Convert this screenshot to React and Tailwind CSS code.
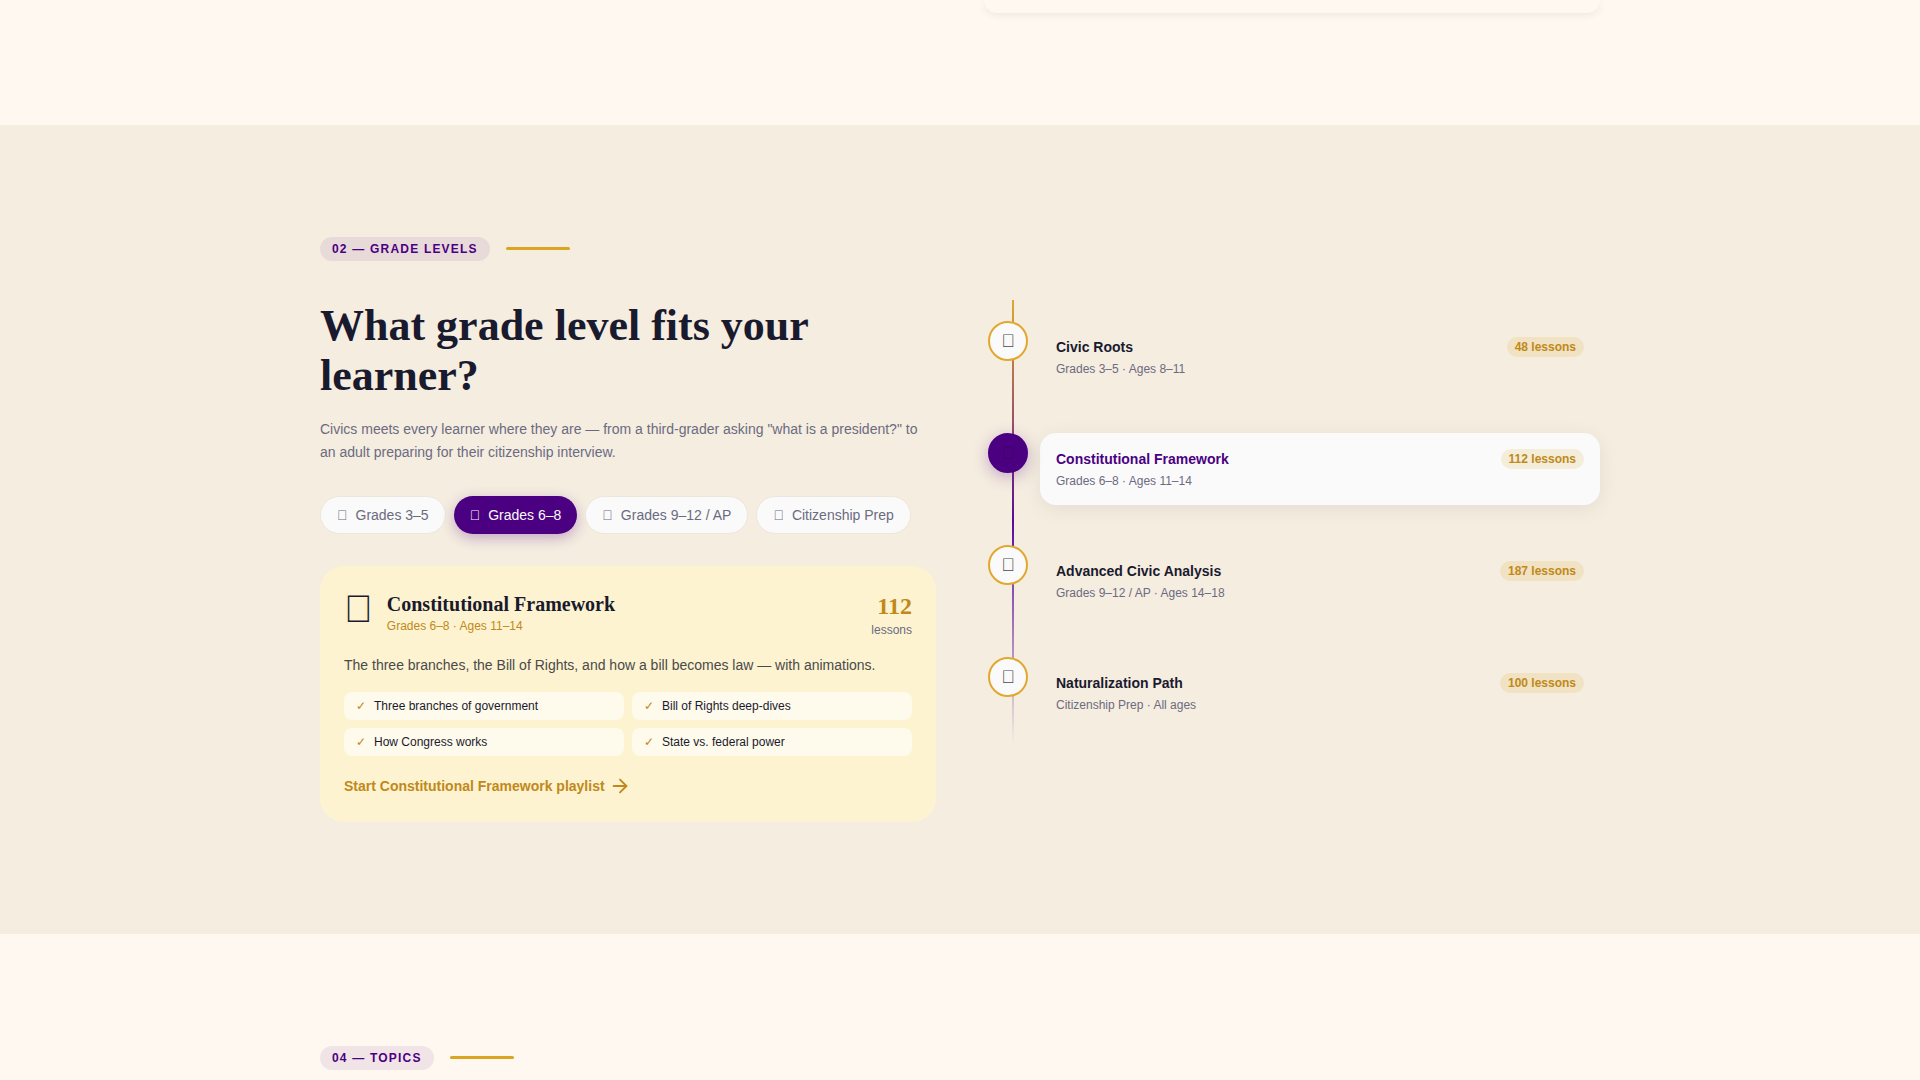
import { ArrowRight } from "lucide-react";

const TOFU = "\uE000";

const levels = [
  { tab: "Grades 3–5", title: "Civic Roots", sub: "Grades 3–5 · Ages 8–11", count: "48 lessons" },
  { tab: "Grades 6–8", title: "Constitutional Framework", sub: "Grades 6–8 · Ages 11–14", count: "112 lessons", active: true },
  { tab: "Grades 9–12 / AP", title: "Advanced Civic Analysis", sub: "Grades 9–12 / AP · Ages 14–18", count: "187 lessons" },
  { tab: "Citizenship Prep", title: "Naturalization Path", sub: "Citizenship Prep · All ages", count: "100 lessons" },
];

const features = ["Three branches of government", "Bill of Rights deep-dives", "How Congress works", "State vs. federal power"];

function SectionTag({ children }) {
  return (
    <div className="flex items-center gap-4">
      <span className="flex h-6 items-center rounded-full bg-[#4b0082]/8 px-3 text-xs font-bold uppercase tracking-[0.1em] text-[#4b0082]">
        {children}
      </span>
      <span className="mb-0.5 h-[3px] w-16 rounded-full bg-[#daa520]" />
    </div>
  );
}

function TimelineRow({ item }) {
  return (
    <div className="flex gap-3">
      <div
        className={`z-10 flex h-10 w-10 shrink-0 items-center justify-center rounded-full border-2 text-lg ${
          item.active
            ? "border-[#4b0082] bg-[#4b0082] text-[#3a0066] shadow-[0_4px_16px_rgba(75,0,130,0.3)]"
            : "border-[#e0a82e] bg-[#fafafa] text-[#4a4a4a]"
        }`}
      >
        {TOFU}
      </div>
      <div
        className={`flex h-[72px] flex-1 items-start justify-between rounded-2xl p-4 ${
          item.active ? "bg-[#fafafa] shadow-[0_4px_20px_rgba(0,0,0,0.07)]" : ""
        }`}
      >
        <div>
          <div className={`text-sm font-bold leading-5 ${item.active ? "text-[#4b0082]" : "text-[#1a1a2e]"}`}>{item.title}</div>
          <div className="mt-[3px] text-xs leading-[18px] text-[#6b6b80]">{item.sub}</div>
        </div>
        <span className="flex h-5 items-center rounded-full bg-[#daa520]/15 px-2 text-xs font-bold text-[#c0891a]">{item.count}</span>
      </div>
    </div>
  );
}

export default function App() {
  return (
    <div className="h-screen overflow-hidden bg-[#fff8f0] font-['Liberation_Sans',sans-serif]">
      {/* end of the section above */}
      <section className="mx-auto h-[125px] w-[1280px]">
        <div className="ml-auto h-[13px] w-[616px] rounded-b-2xl bg-[#fff8f0] shadow-[0_2px_8px_rgba(0,0,0,0.07)]" />
      </section>

      <section className="bg-[#f5ede0] py-28">
        <div className="mx-auto w-[1280px]">
          <SectionTag>02 — Grade Levels</SectionTag>
          <div className="mt-[39px] grid grid-cols-2 items-start gap-12">
            <div>
              <h1 className="pt-px font-['Liberation_Serif',serif] text-[44px] font-bold leading-[50px] text-[#1a1a2e]">
                What grade level fits your learner?
              </h1>
              <p className="mt-[17px] text-sm leading-[23px] text-[#6b6b80]">
                Civics meets every learner where they are — from a third-grader asking "what is a president?" to an adult preparing for their citizenship interview.
              </p>
              <div className="mt-8 flex gap-2">
                {levels.map((l) => (
                  <button
                    key={l.tab}
                    className={`flex h-[38px] items-center gap-2 whitespace-nowrap rounded-full px-4 text-sm ${
                      l.active
                        ? "bg-[#4b0082] text-[#fafafa] shadow-[0_4px_14px_rgba(75,0,130,0.3)]"
                        : "border border-[#ece6dc] bg-[#fafafa] text-[#6b6b80]"
                    }`}
                  >
                    <span>{TOFU}</span>
                    {l.tab}
                  </button>
                ))}
              </div>
              <div className="mt-8 rounded-3xl bg-[#fdf3d0] px-6 pb-[25px] pt-6">
                <div className="flex items-start justify-between">
                  <div className="flex items-start gap-3.5">
                    <span className="text-[38.4px] leading-[38px] text-[#1a1a2e]">{TOFU}</span>
                    <div className="pt-0.5">
                      <div className="font-['Liberation_Serif',serif] text-xl font-bold leading-6 text-[#1a1a2e]">Constitutional Framework</div>
                      <div className="mt-px text-xs leading-[18px] text-[#c0891a]">Grades 6–8 · Ages 11–14</div>
                    </div>
                  </div>
                  <div className="text-right">
                    <div className="font-['Liberation_Serif',serif] text-2xl font-bold leading-8 text-[#c0891a]">112</div>
                    <div className="text-xs leading-4 text-[#6b6b80]">lessons</div>
                  </div>
                </div>
                <p className="mt-4 text-sm leading-[22px] text-[#4a4a4a]">
                  The three branches, the Bill of Rights, and how a bill becomes law — with animations.
                </p>
                <div className="mt-4 grid grid-cols-2 gap-2">
                  {features.map((f) => (
                    <div key={f} className="flex h-7 items-center gap-2 rounded-lg bg-white/60 px-3 text-xs text-[#1a1a2e]">
                      <span className="text-[#c0891a]">✓</span>
                      {f}
                    </div>
                  ))}
                </div>
                <div className="mt-[19px] flex items-center gap-1 text-sm font-bold leading-5 text-[#c0891a]">
                  Start Constitutional Framework playlist
                  <ArrowRight size={22} strokeWidth={2} />
                </div>
              </div>
            </div>

            <div className="relative flex flex-col gap-10 pb-[15px] pl-1 pt-[21px]">
              <div className="absolute bottom-0 left-7 top-0 w-0.5 bg-[linear-gradient(to_bottom,#e0a82e,#5a0a9a_50%,transparent)]" />
              {levels.map((l) => (
                <TimelineRow key={l.title} item={l} />
              ))}
            </div>
          </div>
        </div>
      </section>

      <section className="mx-auto w-[1280px] pt-28">
        <SectionTag>04 — Topics</SectionTag>
      </section>
    </div>
  );
}
